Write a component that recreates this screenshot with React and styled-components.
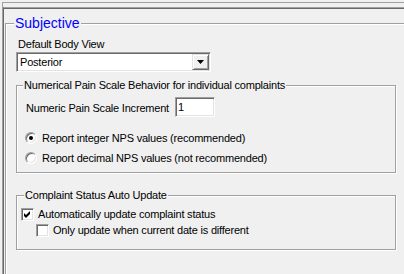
import React from 'react';
import styled, { createGlobalStyle } from 'styled-components';

const GlobalStyle = createGlobalStyle`
  html, body {
    margin: 0;
    padding: 0;
    background: #f0f0f0;
  }
  body {
    font-family: "Liberation Sans", Arial, sans-serif;
    font-size: 11px;
    letter-spacing: -0.2px;
    color: #000;
  }
`;

const Screen = styled.div`
  width: 404px;
  height: 274px;
  overflow: hidden;
  background: #f0f0f0;
`;

const Frame = styled.div`
  margin: 2px 0 0 2px;
  height: 300px;
  border-top: 1px solid #a0a0a0;
  border-left: 1px solid #a0a0a0;
`;

const Panel = styled.div`
  margin-top: 4px;
  height: 300px;
  border-top: 1px solid #a0a0a0;
  border-left: 1px solid #696969;
  box-shadow: inset 0 1px 0 #696969;
`;

const GroupBox = styled.fieldset`
  box-sizing: border-box;
  margin: ${p => p.$margin || '0'};
  padding: ${p => p.$padding || '0'};
  width: ${p => p.$width};
  height: ${p => p.$height || 'auto'};
  min-width: 0;
  border: 1px solid #a0a0a0;
  box-shadow: inset 1px 1px 0 #fff, 1px 1px 0 #fff;
`;

const Legend = styled.legend`
  margin-left: ${p => p.$offset || '0'};
  padding: 0 1px;
  background: #f0f0f0;
  color: ${p => (p.$accent ? '#0000ff' : '#000')};
  font-size: ${p => (p.$accent ? '14px' : '11px')};
  line-height: ${p => (p.$accent ? '16px' : '13px')};
  letter-spacing: ${p => (p.$accent ? '0' : '-0.2px')};
`;

const Label = styled.div`
  margin-left: 2px;
  line-height: 13px;
  white-space: nowrap;
`;

const Combo = styled.div`
  box-sizing: border-box;
  display: flex;
  align-items: center;
  width: 195px;
  height: 20px;
  margin-top: 1px;
  background: #fff;
  border: 1px solid;
  border-color: #a0a0a0 #fff #fff #a0a0a0;
  box-shadow: inset 1px 1px 0 #696969, inset -1px -1px 0 #e3e3e3;
`;

const ComboText = styled.span`
  flex: 1;
  padding-left: 3px;
  line-height: 16px;
`;

const DropButton = styled.span`
  box-sizing: border-box;
  display: flex;
  align-items: center;
  justify-content: center;
  width: 17px;
  height: 16px;
  margin-right: 1px;
  background: #f0f0f0;
  border: 1px solid;
  border-color: #e3e3e3 #696969 #696969 #e3e3e3;
  box-shadow: inset 1px 1px 0 #fff, inset -1px -1px 0 #a0a0a0;
`;

const FieldRow = styled.div`
  display: flex;
  align-items: center;
  gap: 6px;
`;

const FieldLabel = styled.span`
  margin: 3px 0 0 1px;
  line-height: 13px;
  white-space: nowrap;
`;

const NumberInput = styled.input`
  box-sizing: border-box;
  width: 40px;
  height: 20px;
  margin: 0;
  padding: 0 0 0 2px;
  font: inherit;
  background: #fff;
  border: 1px solid;
  border-color: #a0a0a0 #fff #fff #a0a0a0;
  box-shadow: inset 1px 1px 0 #696969, inset -1px -1px 0 #e3e3e3;
  outline: none;
`;

const OptionList = styled.div`
  margin-top: ${p => p.$top || '0'};
`;

const Option = styled.label`
  display: flex;
  align-items: center;
  gap: ${p => p.$gap || '5px'};
  height: ${p => p.$height || '20px'};
  padding-left: ${p => p.$indent || '0'};
  white-space: nowrap;
`;

const Radio = styled.span`
  box-sizing: border-box;
  display: flex;
  align-items: center;
  justify-content: center;
  width: 12px;
  height: 12px;
  border-radius: 50%;
  border: 1px solid;
  border-color: #a0a0a0 #fff #fff #a0a0a0;
  background: #fff;
  box-shadow: inset 1px 1px 0 #696969, inset -1px -1px 0 #e3e3e3;

  &::after {
    content: '';
    display: ${p => (p.$checked ? 'block' : 'none')};
    width: 4px;
    height: 4px;
    border-radius: 50%;
    background: #000;
  }
`;

const Check = styled.span`
  box-sizing: border-box;
  display: flex;
  width: 13px;
  height: 13px;
  border: 1px solid;
  border-color: #a0a0a0 #fff #fff #a0a0a0;
  background: #fff;
  box-shadow: inset 1px 1px 0 #696969, inset -1px -1px 0 #e3e3e3;
`;

function CheckBox({ checked }) {
  return (
    <Check>
      {checked && (
        <svg width="11" height="11" viewBox="0 0 11 11">
          <path d="M2 4 L4 6 L8 2 L8 5 L4 9 L2 7 Z" fill="#000" />
        </svg>
      )}
    </Check>
  );
}

export default function App() {
  return (
    <Screen>
      <GlobalStyle />
      <Frame>
        <Panel>
          <GroupBox $margin="7px 0 0 1px" $padding="7px 0 0 10px" $width="420px" $height="300px">
            <Legend $accent $offset="-2px">Subjective</Legend>
            <Label>Default Body View</Label>
            <Combo>
              <ComboText>Posterior</ComboText>
              <DropButton>
                <svg width="7" height="4" viewBox="0 0 7 4">
                  <polygon points="0,0 7,0 3.5,4" fill="#000" />
                </svg>
              </DropButton>
            </Combo>

            <GroupBox $margin="7px 0 0 0" $padding="5px 0 4px 8px" $width="380px">
              <Legend $offset="-2px">Numerical Pain Scale Behavior for individual complaints</Legend>
              <FieldRow>
                <FieldLabel>Numeric Pain Scale Increment</FieldLabel>
                <NumberInput defaultValue="1" />
              </FieldRow>
              <OptionList $top="11px">
                <Option>
                  <Radio $checked />
                  Report integer NPS values (recommended)
                </Option>
                <Option>
                  <Radio />
                  Report decimal NPS values (not recommended)
                </Option>
              </OptionList>
            </GroupBox>

            <GroupBox $margin="16px 0 0 0" $padding="4px 0 11px 4px" $width="380px">
              <Legend $offset="3px">Complaint Status Auto Update</Legend>
              <Option $height="16px" $gap="4px">
                <CheckBox checked />
                Automatically update complaint status
              </Option>
              <Option $height="16px" $gap="4px" $indent="15px">
                <CheckBox />
                Only update when current date is different
              </Option>
            </GroupBox>
          </GroupBox>
        </Panel>
      </Frame>
    </Screen>
  );
}
